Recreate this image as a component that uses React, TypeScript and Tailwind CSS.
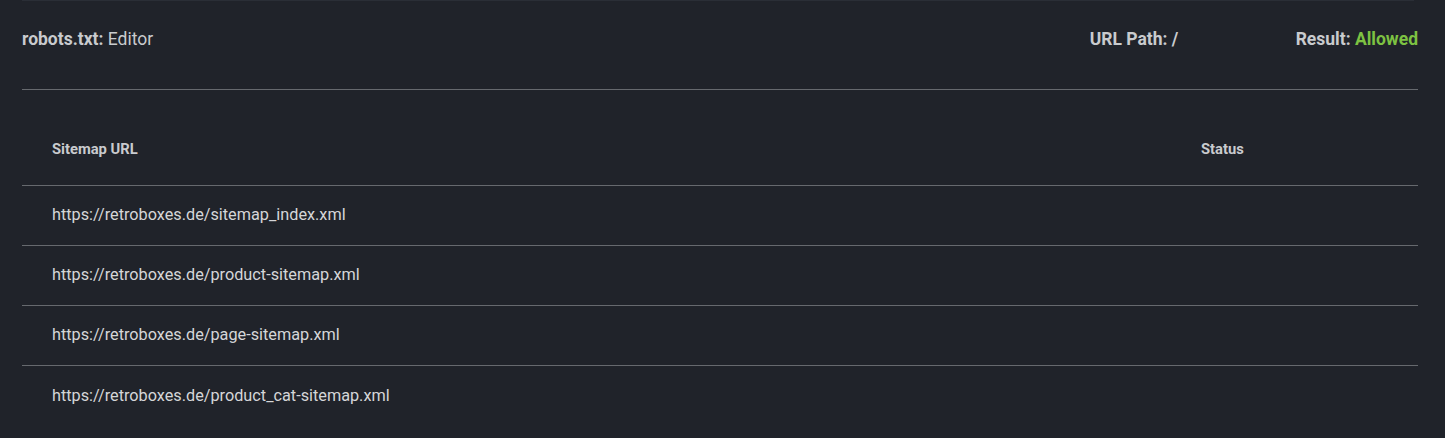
import React from 'react';

const sitemaps = [
  'https://retroboxes.de/sitemap_index.xml',
  'https://retroboxes.de/product-sitemap.xml',
  'https://retroboxes.de/page-sitemap.xml',
  'https://retroboxes.de/product_cat-sitemap.xml',
];

const App: React.FC = () => {
  return (
    <div className="min-h-[438px] w-full bg-[#20232a] font-['Roboto',sans-serif] text-[#c9cbce]">
      <div className="ml-[22px] mr-[31px] h-px bg-[#2a2e36]" />
      <div className="pl-[22px] pr-[27px]">
        {/* Header row */}
        <div className="flex items-center pt-[26px] pb-[38px] text-[17.5px] leading-6 border-b border-[#66696e]">
          <div className="flex-1">
            <span className="font-bold">robots.txt:</span> Editor
          </div>
          <div className="font-bold w-[206px]">URL Path: /</div>
          <div className="font-bold">
            Result: <span className="text-[#7dc242]">Allowed</span>
          </div>
        </div>

        {/* Sitemap table */}
        <div className="mt-[24px]">
          <div className="flex h-[72px] items-center border-b border-[#66696e] text-[14.75px] font-bold text-[#c9cbce]">
            <div className="w-[1149px] pl-[30px]">Sitemap URL</div>
            <div className="pl-[30px]">Status</div>
          </div>
          {sitemaps.map((url, i) => (
            <div
              key={url}
              className={`flex h-[60px] items-center text-[16.25px] text-[#d5d6d8] ${
                i < sitemaps.length - 1 ? 'border-b border-[#66696e]' : ''
              }`}
            >
              <div className="w-[1149px] pl-[30px]">{url}</div>
              <div className="pl-[30px]" />
            </div>
          ))}
        </div>
      </div>
    </div>
  );
};

export default App;
